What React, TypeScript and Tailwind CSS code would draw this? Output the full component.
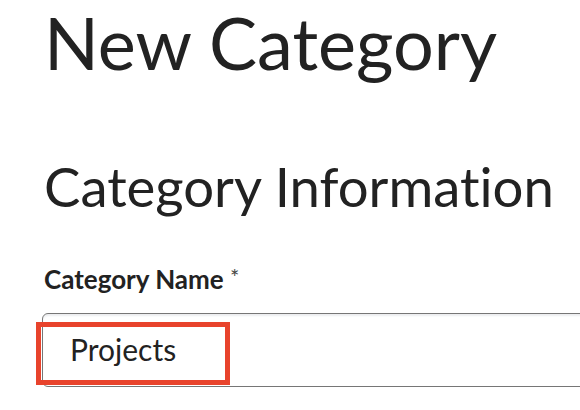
export default function App() {
  return (
    <div className="relative h-[410px] w-[580px] overflow-hidden bg-white font-['Lato','Noto_Sans',sans-serif] text-[#222] [font-variant-ligatures:none]">
      <div className="pl-[44px] pt-[6px]">
        <h1 className="text-[72px] font-normal leading-none">New Category</h1>
        <h2 className="mt-[81px] text-[54.5px] font-normal leading-none">Category Information</h2>
        <label className="mt-[52px] block text-[26px] font-bold leading-none">
          Category Name <span className="align-top text-[22px] font-normal text-[#444]">*</span>
        </label>
        <div className="relative mt-[21px] -ml-[2px] w-[600px]">
          <div className="flex h-[74px] items-center rounded-[6px] border border-[#767676] bg-white pl-[27px] shadow-[inset_0_3px_2px_-1px_#eceef0] text-[30px]">
            Projects
          </div>
          <div className="absolute left-[-6px] top-[9px] h-[63px] w-[194px] border-[5px] border-[#e8432c]" />
        </div>
      </div>
    </div>
  );
}
